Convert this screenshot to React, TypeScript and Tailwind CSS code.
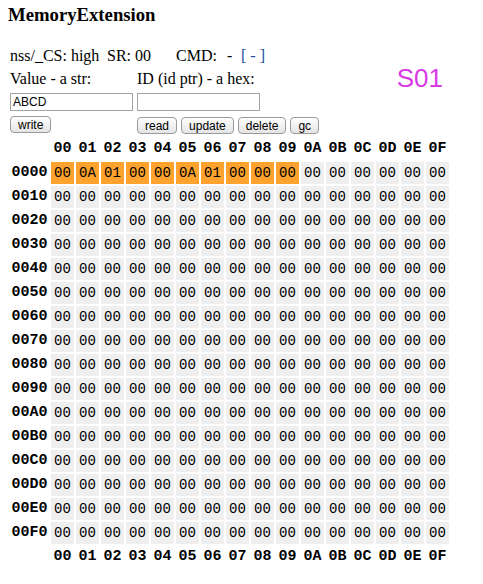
import React from 'react';

const cols = Array.from({ length: 16 }, (_, i) => i.toString(16).toUpperCase().padStart(2, '0'));
const rows = Array.from({ length: 16 }, (_, i) => (i * 16).toString(16).toUpperCase().padStart(4, '0'));
const firstRow = ['00', '0A', '01', '00', '00', '0A', '01', '00', '00', '00'];

const Btn = ({ label }: { label: string }) => (
  <button className="h-[17px] px-[7px] rounded-[4px] border border-[#9a9a9a] bg-linear-to-b from-white to-[#e4e4e4] text-[12px] leading-[16px] text-black font-['Liberation_Sans',sans-serif]">
    {label}
  </button>
);

const HeaderRow = () => (
  <tr>
    <th className="w-[39px] p-0" />
    {cols.map((c) => (
      <th key={c} className="w-[23px] h-[22px] p-0 text-center font-bold text-[15px] font-['Liberation_Mono',monospace]">
        {c}
      </th>
    ))}
  </tr>
);

export default function App() {
  return (
    <div className="w-[483px] min-h-[584px] bg-white px-[8px] pt-[4px] text-black font-['Liberation_Serif',serif]">
      <h3 className="text-[18.72px] font-bold leading-[22px]">MemoryExtension</h3>

      <div className="flex mt-[21px]">
        <div className="pl-[2px] text-[16px]">
          <div className="flex leading-[18px] whitespace-pre">
            <span className="w-[97px]">nss/_CS: high</span>
            <span className="w-[69px]">SR: 00</span>
            <span className="w-[51px]">CMD:</span>
            <span className="w-[14px]">-</span>
            <span className="text-[#2448a8]">[ - ]</span>
          </div>
          <div className="flex mt-[5px] leading-[18px]">
            <span className="w-[127px]">Value - a str:</span>
            <span>ID (id ptr) - a hex:</span>
          </div>
          <div className="flex gap-[4px] mt-[5px]">
            <input
              defaultValue="ABCD"
              className="w-[123px] h-[18px] border border-[#a3a3a3] px-[2px] text-[12px] font-['Liberation_Sans',sans-serif] outline-none"
            />
            <input className="w-[123px] h-[18px] border border-[#a3a3a3] px-[2px] text-[12px] font-['Liberation_Sans',sans-serif] outline-none" />
          </div>
          <div className="flex items-start mt-[5px]">
            <div className="flex w-[127px]">
              <Btn label="write" />
            </div>
            <div className="flex gap-[4px] mt-[1px]">
              <Btn label="read" />
              <Btn label="update" />
              <Btn label="delete" />
              <Btn label="gc" />
            </div>
          </div>
        </div>
        <div className="ml-auto mr-[32px] mt-[16px] text-[26px] leading-[30px] text-[#d93ae6] font-['Liberation_Sans',sans-serif]">
          S01
        </div>
      </div>

      <table className="mt-[2px] border-separate border-spacing-[2px] leading-[18px]">
        <thead>
          <HeaderRow />
        </thead>
        <tbody>
          {rows.map((r, ri) => (
            <tr key={r}>
              <th className="w-[39px] h-[22px] p-0 text-center font-bold text-[15px] font-['Liberation_Mono',monospace]">
                {r}
              </th>
              {cols.map((c, ci) => {
                const hot = ri === 0 && ci < firstRow.length;
                return (
                  <td
                    key={c}
                    className={
                      hot
                        ? 'w-[23px] h-[22px] p-0 text-center text-[14px] bg-[#ffa32e] font-[\'Liberation_Mono\',monospace]'
                        : 'w-[23px] h-[22px] p-0 text-center text-[14px] bg-[#efefef] font-[\'Liberation_Mono\',monospace]'
                    }
                  >
                    {hot ? firstRow[ci] : '00'}
                  </td>
                );
              })}
            </tr>
          ))}
          <HeaderRow />
        </tbody>
      </table>
    </div>
  );
}
